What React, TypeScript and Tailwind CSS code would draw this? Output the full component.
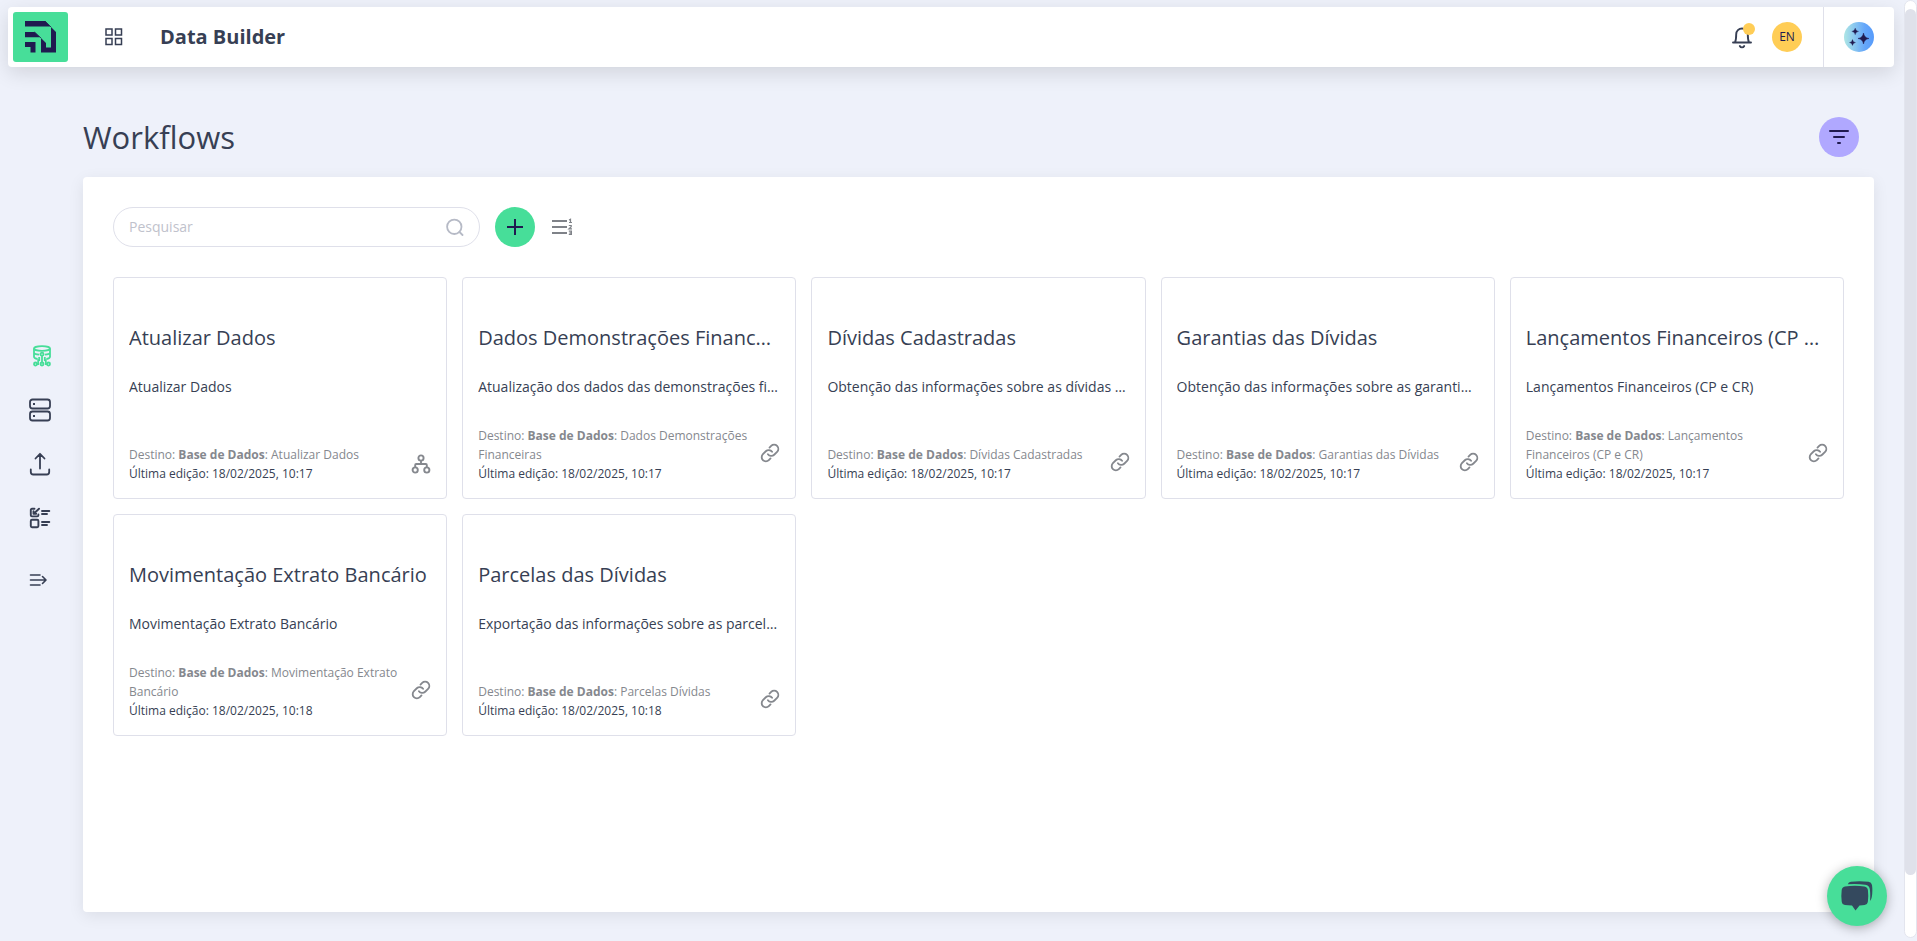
import type { ReactNode } from "react";

type Workflow = {
  title: string;
  description: string;
  target: string;
  editedAt: string;
  kind: "link" | "tree";
};

const WORKFLOWS: Workflow[] = [
  {
    title: "Atualizar Dados",
    description: "Atualizar Dados",
    target: "Atualizar Dados",
    editedAt: "18/02/2025, 10:17",
    kind: "tree",
  },
  {
    title: "Dados Demonstrações Financeiras",
    description: "Atualização dos dados das demonstrações financeiras",
    target: "Dados Demonstrações Financeiras",
    editedAt: "18/02/2025, 10:17",
    kind: "link",
  },
  {
    title: "Dívidas Cadastradas",
    description: "Obtenção das informações sobre as dívidas cadastradas",
    target: "Dívidas Cadastradas",
    editedAt: "18/02/2025, 10:17",
    kind: "link",
  },
  {
    title: "Garantias das Dívidas",
    description: "Obtenção das informações sobre as garantias das dívidas",
    target: "Garantias das Dívidas",
    editedAt: "18/02/2025, 10:17",
    kind: "link",
  },
  {
    title: "Lançamentos Financeiros (CP e CR)",
    description: "Lançamentos Financeiros (CP e CR)",
    target: "Lançamentos Financeiros (CP e CR)",
    editedAt: "18/02/2025, 10:17",
    kind: "link",
  },
  {
    title: "Movimentação Extrato Bancário",
    description: "Movimentação Extrato Bancário",
    target: "Movimentação Extrato Bancário",
    editedAt: "18/02/2025, 10:18",
    kind: "link",
  },
  {
    title: "Parcelas das Dívidas",
    description: "Exportação das informações sobre as parcelas das dívidas",
    target: "Parcelas Dívidas",
    editedAt: "18/02/2025, 10:18",
    kind: "link",
  },
];

function Logo() {
  return (
    <svg viewBox="0 0 55 50" className="h-[50px] w-[55px]" aria-hidden>
      <rect width="55" height="50" rx="3" fill="#47de99" />
      <g fill="#201a50">
        <path d="M12 9h20l5.500 5.500H12z" />
        <path d="M38 15l5 5v20.500H28V26l5 5v4.500h5z" />
        <path d="M12 20h9.500l5.500 5.200H12z" />
        <path d="M12 30h10.500v10.500h-5V35H12z" />
      </g>
      <path d="M32 9l6 6M21.500 20l6.500 6" stroke="#201a50" strokeWidth=".8" />
    </svg>
  );
}

function GridIcon() {
  return (
    <svg viewBox="0 0 18 18" className="size-[18px]" fill="none" stroke="currentColor" strokeWidth="1.500" aria-hidden>
      <rect x="1" y="1" width="6" height="6" />
      <rect x="10.500" y="1" width="6" height="6" />
      <rect x="1" y="10.500" width="6" height="6" />
      <rect x="10.500" y="10.500" width="6" height="6" />
    </svg>
  );
}

function BellIcon() {
  return (
    <svg viewBox="0 0 24 24" className="size-6" fill="none" stroke="currentColor" strokeWidth="1.900" strokeLinecap="round" strokeLinejoin="round" aria-hidden>
      <path d="M3 17.500h18M5 17.300c1-2 1.200-3.500 1.200-8a5.800 5.800 0 0 1 11.600 0c0 4.500.2 6 1.200 8" />
      <path d="M9.800 21c.5 1 1.200 1.400 2.200 1.400s1.700-.4 2.200-1.400" />
    </svg>
  );
}

function SparkIcon() {
  return (
    <svg viewBox="0 0 30 30" className="size-[30px]" aria-hidden>
      <defs>
        <linearGradient id="spark" x1="0" x2="1">
          <stop offset="0.050" stopColor="#a9e2e6" />
          <stop offset="0.700" stopColor="#64a6fa" />
          <stop offset="1" stopColor="#579bfb" />
        </linearGradient>
      </defs>
      <circle cx="15" cy="15" r="15" fill="url(#spark)" />
      <g fill="#201a50">
        <path d="M19.500 11q.7 4.800 5.500 5.500-4.800.7-5.500 5.500-.7-4.800-5.500-5.500 4.800-.7 5.500-5.500z" stroke="#201a50" strokeWidth=".5" />
        <path d="M11.200 6q.4 3 3.400 3.400-3 .4-3.400 3.400-.4-3-3.400-3.400 3-.4 3.400-3.400z" stroke="#201a50" strokeWidth=".3" />
        <path d="M8.500 17.500q.4 2.600 3 3-2.600.4-3 3-.4-2.600-3-3 2.600-.4 3-3z" stroke="#201a50" strokeWidth=".3" />
      </g>
    </svg>
  );
}

function DatabaseFlowIcon() {
  return (
    <svg viewBox="0 0 24 24" className="size-6" fill="none" stroke="currentColor" strokeWidth="1.800" aria-hidden>
      <ellipse cx="14" cy="4.500" rx="8" ry="2.300" />
      <path d="M6 4.500v8.300c0 1.200 1.500 1.900 3.600 2.200M22 4.500v8.300c0 1.200-1.500 1.900-3.600 2.200M6 8.700c.3 1.200 2.500 1.800 5.200 2M22 8.700c-.3 1.200-2.500 1.800-5.200 2" />
      <circle cx="14" cy="10.200" r="1.500" />
      <circle cx="7.500" cy="20" r="1.500" />
      <circle cx="14" cy="20" r="1.500" />
      <circle cx="20.500" cy="20" r="1.500" />
      <path d="M14 11.700v6.700M11.200 13v3.200h-1V20H9M16.800 13v3.200h1V20H19" />
    </svg>
  );
}

function ServerIcon() {
  return (
    <svg viewBox="0 0 24 24" className="size-6" fill="none" stroke="currentColor" strokeWidth="1.800" aria-hidden>
      <rect x="2" y="1.500" width="20" height="9" rx="2.500" />
      <rect x="2" y="13.500" width="20" height="9" rx="2.500" />
      <path d="M5 6h2M5 18h2" />
    </svg>
  );
}

function UploadIcon() {
  return (
    <svg viewBox="0 0 24 24" className="size-6" fill="none" stroke="currentColor" strokeWidth="1.800" strokeLinecap="round" strokeLinejoin="round" aria-hidden>
      <path d="M12 16.500V2M7.500 6.500L12 1.800l4.500 4.700M2.800 17.500V20a2.500 2.500 0 0 0 2.500 2.500h13.400a2.500 2.500 0 0 0 2.500-2.500v-2.500" />
    </svg>
  );
}

function ChecklistIcon() {
  return (
    <svg viewBox="0 0 24 24" className="size-6" fill="none" stroke="currentColor" strokeWidth="1.900" strokeLinecap="round" strokeLinejoin="round" aria-hidden>
      <path d="M6.500 2.700H4A1.200 1.200 0 0 0 2.800 4v5.200a1.200 1.200 0 0 0 1.200 1.200h5.200a1.200 1.200 0 0 0 1.200-1.200V8.500M5.500 5.200v2.600h2.700M6 7.500l5-4.800" />
      <rect x="2.800" y="13.700" width="7.600" height="7.600" rx="1.200" />
      <path d="M14 5h7.300M14 8h5M14 16h7.300M14 19h5" />
    </svg>
  );
}

function ExpandIcon() {
  return (
    <svg viewBox="0 0 24 24" className="size-6" fill="none" stroke="currentColor" strokeWidth="1.600" strokeLinecap="round" strokeLinejoin="round" aria-hidden>
      <path d="M2.500 7H12M2.500 12h15M2.500 17H12M14.500 8.500L18 12l-3.500 3.500" />
    </svg>
  );
}

function FilterIcon() {
  return (
    <svg viewBox="0 0 20 14" className="h-3.5 w-5" stroke="#201a50" strokeWidth="2" strokeLinecap="round" aria-hidden>
      <path d="M1 1h18M5 7h10M9 13h2" />
    </svg>
  );
}

function SearchIcon() {
  return (
    <svg viewBox="0 0 18 18" className="size-[18px]" fill="none" stroke="#b6bac6" strokeWidth="1.800" strokeLinecap="round" aria-hidden>
      <circle cx="8.300" cy="8.800" r="7.200" />
      <path d="M13.500 14l3 3" />
    </svg>
  );
}

function OrderedListIcon() {
  return (
    <svg viewBox="0 0 20 18" className="h-[18px] w-5" fill="none" stroke="#7f8288" aria-hidden>
      <path d="M0 3h15M0 9h15M0 15h15" strokeWidth="2" />
      <path d="M17 2l1.500-.7V4.500M17 4.500h3M16.800 7.500h2.400v1.300l-2.200 2h3M16.800 13.200h2.600v3.200h-2.600M17.500 14.800h2" strokeWidth="1.200" />
    </svg>
  );
}

function LinkIcon() {
  return (
    <svg viewBox="0 0 24 24" className="size-5" fill="none" stroke="#85888e" strokeWidth="2.200" strokeLinecap="round" strokeLinejoin="round" aria-hidden>
      <path d="M9.500 13.500a5 5 0 0 0 7.500.6l3.500-3.500a5 5 0 0 0-7.100-7.100L11.400 5.500" />
      <path d="M14.500 10.500a5 5 0 0 0-7.500-.6l-3.500 3.500a5 5 0 0 0 7.100 7.100l2-2" />
    </svg>
  );
}

function TreeIcon() {
  return (
    <svg viewBox="0 0 20 20" className="size-5" fill="none" stroke="#85888e" strokeWidth="1.900" aria-hidden>
      <circle cx="10" cy="4" r="2.600" />
      <circle cx="4.200" cy="16" r="2.600" />
      <circle cx="15.800" cy="16" r="2.600" />
      <path d="M10 6.700V10M4.200 13.300V11a1 1 0 0 1 1-1h9.600a1 1 0 0 1 1 1v2.300" />
    </svg>
  );
}

function ChatIcon() {
  return (
    <svg viewBox="0 0 32 30" className="h-[30px] w-8" fill="#34495e" aria-hidden>
      <path d="M4 5.500Q14 3.800 23.500 5.500q3 .5 3.400 3.500.7 6 0 11.500-.4 3-3.400 3.500-2 .4-5 .5L14.500 29.500 11 24.500Q7 24.400 4 24 1 23.500.7 20.500 0 14.500.7 9 1 6 4 5.500z" />
      <path d="M6.800 3.200Q7.500.900 10 .7q9-.9 17.500.1 3 .4 3.500 3.200.8 6-.2 12-.4 2.500-1.800 4 .5-6-.1-11.500-.4-4.200-4.700-4.800Q16 2.500 6.800 3.200z" />
    </svg>
  );
}

function NavButton({ label, children }: { label: string; children: ReactNode }) {
  return (
    <button type="button" aria-label={label} className="size-6">
      {children}
    </button>
  );
}

function WorkflowCard({ workflow }: { workflow: Workflow }) {
  return (
    <article className="flex min-h-[222px] min-w-0 flex-col rounded border border-[#dfe0ea] px-[15px] pt-11 pb-[15px]">
      <h2 className="truncate text-xl leading-8">{workflow.title}</h2>
      <p className="mt-[22px] truncate text-sm leading-[22px]">
        {workflow.description}
      </p>
      <div className="mt-auto flex items-center justify-between gap-2 text-xs leading-[19px]">
        <div className="min-w-0">
          <p className="text-[#85888e]">
            Destino: <b>Base de Dados</b>: {workflow.target}
          </p>
          <p>Última edição: {workflow.editedAt}</p>
        </div>
        {workflow.kind === "tree" ? (
          <span className="shrink-0">
            <TreeIcon />
          </span>
        ) : (
          <span className="shrink-0 pb-1">
            <LinkIcon />
          </span>
        )}
      </div>
    </article>
  );
}

export default function App() {
  return (
    <div className="flex min-h-screen bg-[#eef1fa] font-['Open_Sans','Noto_Sans',sans-serif] text-[#373f54]">
      <div className="flex min-w-0 flex-1 flex-col">
        <header className="mt-[7px] mr-2.5 ml-2 flex h-[60px] items-center rounded bg-white pl-[5px] shadow-[0_6px_20px_rgba(0,0,0,0.12)]">
          <a href="#" aria-label="Início">
            <Logo />
          </a>
          <button type="button" aria-label="Aplicativos" className="ml-[37px]">
            <GridIcon />
          </button>
          <span className="ml-[37px] text-xl font-bold">Data Builder</span>
          <div className="ml-auto flex items-center gap-[18px] pr-[21px]">
            <button type="button" aria-label="Notificações" className="relative">
              <BellIcon />
              <span className="absolute -top-0.5 -right-px size-3 rounded-full bg-[#ffcd56]" />
            </button>
            <button
              type="button"
              className="size-[30px] rounded-full bg-[#ffcd56] text-xs text-[#201a50]"
            >
              EN
            </button>
          </div>
          <div className="flex h-full items-center border-l border-[#dfe0ea] px-5">
            <button type="button" aria-label="Assistente">
              <SparkIcon />
            </button>
          </div>
        </header>

        <div className="flex flex-1">
          <nav
            aria-label="Menu"
            className="flex w-[83px] shrink-0 flex-col justify-center gap-[30px] pb-18 pl-7"
          >
            <span className="size-6 text-[#47de99]">
              <NavButton label="Data Builder">
                <DatabaseFlowIcon />
              </NavButton>
            </span>
            <NavButton label="Bases de dados">
              <ServerIcon />
            </NavButton>
            <NavButton label="Enviar">
              <UploadIcon />
            </NavButton>
            <NavButton label="Tarefas">
              <ChecklistIcon />
            </NavButton>
            <span className="mt-2 size-6">
              <NavButton label="Expandir menu">
                <ExpandIcon />
              </NavButton>
            </span>
          </nav>

          <main className="flex min-w-0 flex-1 flex-col pt-[50px] pr-[30px] pb-[29px]">
            <div className="flex h-10 items-center justify-between pr-[15px]">
              <h1 className="text-[31px]">Workflows</h1>
              <button
                type="button"
                aria-label="Filtrar"
                className="grid size-10 place-items-center rounded-full bg-[#b0a8ff]"
              >
                <FilterIcon />
              </button>
            </div>

            <section className="mt-5 flex-1 rounded bg-white p-[30px] shadow-[0_4px_16px_rgba(0,0,0,0.08)]">
              <div className="flex items-center gap-[15px]">
                <label className="flex h-10 w-[367px] items-center rounded-full border border-[#dfe0ea] px-[15px]">
                  <input
                    type="search"
                    aria-label="Pesquisar"
                    placeholder="Pesquisar"
                    className="min-w-0 flex-1 text-sm outline-none placeholder:text-[#bfc2cc]"
                  />
                  <SearchIcon />
                </label>
                <button
                  type="button"
                  aria-label="Adicionar"
                  className="grid size-10 place-items-center rounded-full bg-[#47de99]"
                >
                  <svg viewBox="0 0 16 16" className="size-4" stroke="#201a50" strokeWidth="2" aria-hidden>
                    <path d="M8 0v16M0 8h16" />
                  </svg>
                </button>
                <button type="button" aria-label="Ordenar" className="px-0.5">
                  <OrderedListIcon />
                </button>
              </div>

              <div className="mt-[30px] grid grid-cols-5 gap-[15px]">
                {WORKFLOWS.map((workflow) => (
                  <WorkflowCard key={workflow.title} workflow={workflow} />
                ))}
              </div>
            </section>
          </main>
        </div>
      </div>

      <div className="flex w-[13px] shrink-0 flex-col pb-[3px]" aria-hidden>
        <div className="flex-1 rounded-full border border-[#e3e5ee] bg-white pt-2">
          <div className="h-14/15 rounded-full bg-[#dfe1ea]" />
        </div>
      </div>

      <button
        type="button"
        aria-label="Abrir chat"
        className="fixed right-[30px] bottom-[15px] grid size-[60px] place-items-center rounded-full bg-[#47de99] shadow-[0_2px_12px_rgba(0,0,0,0.3)]"
      >
        <ChatIcon />
      </button>
    </div>
  );
}
